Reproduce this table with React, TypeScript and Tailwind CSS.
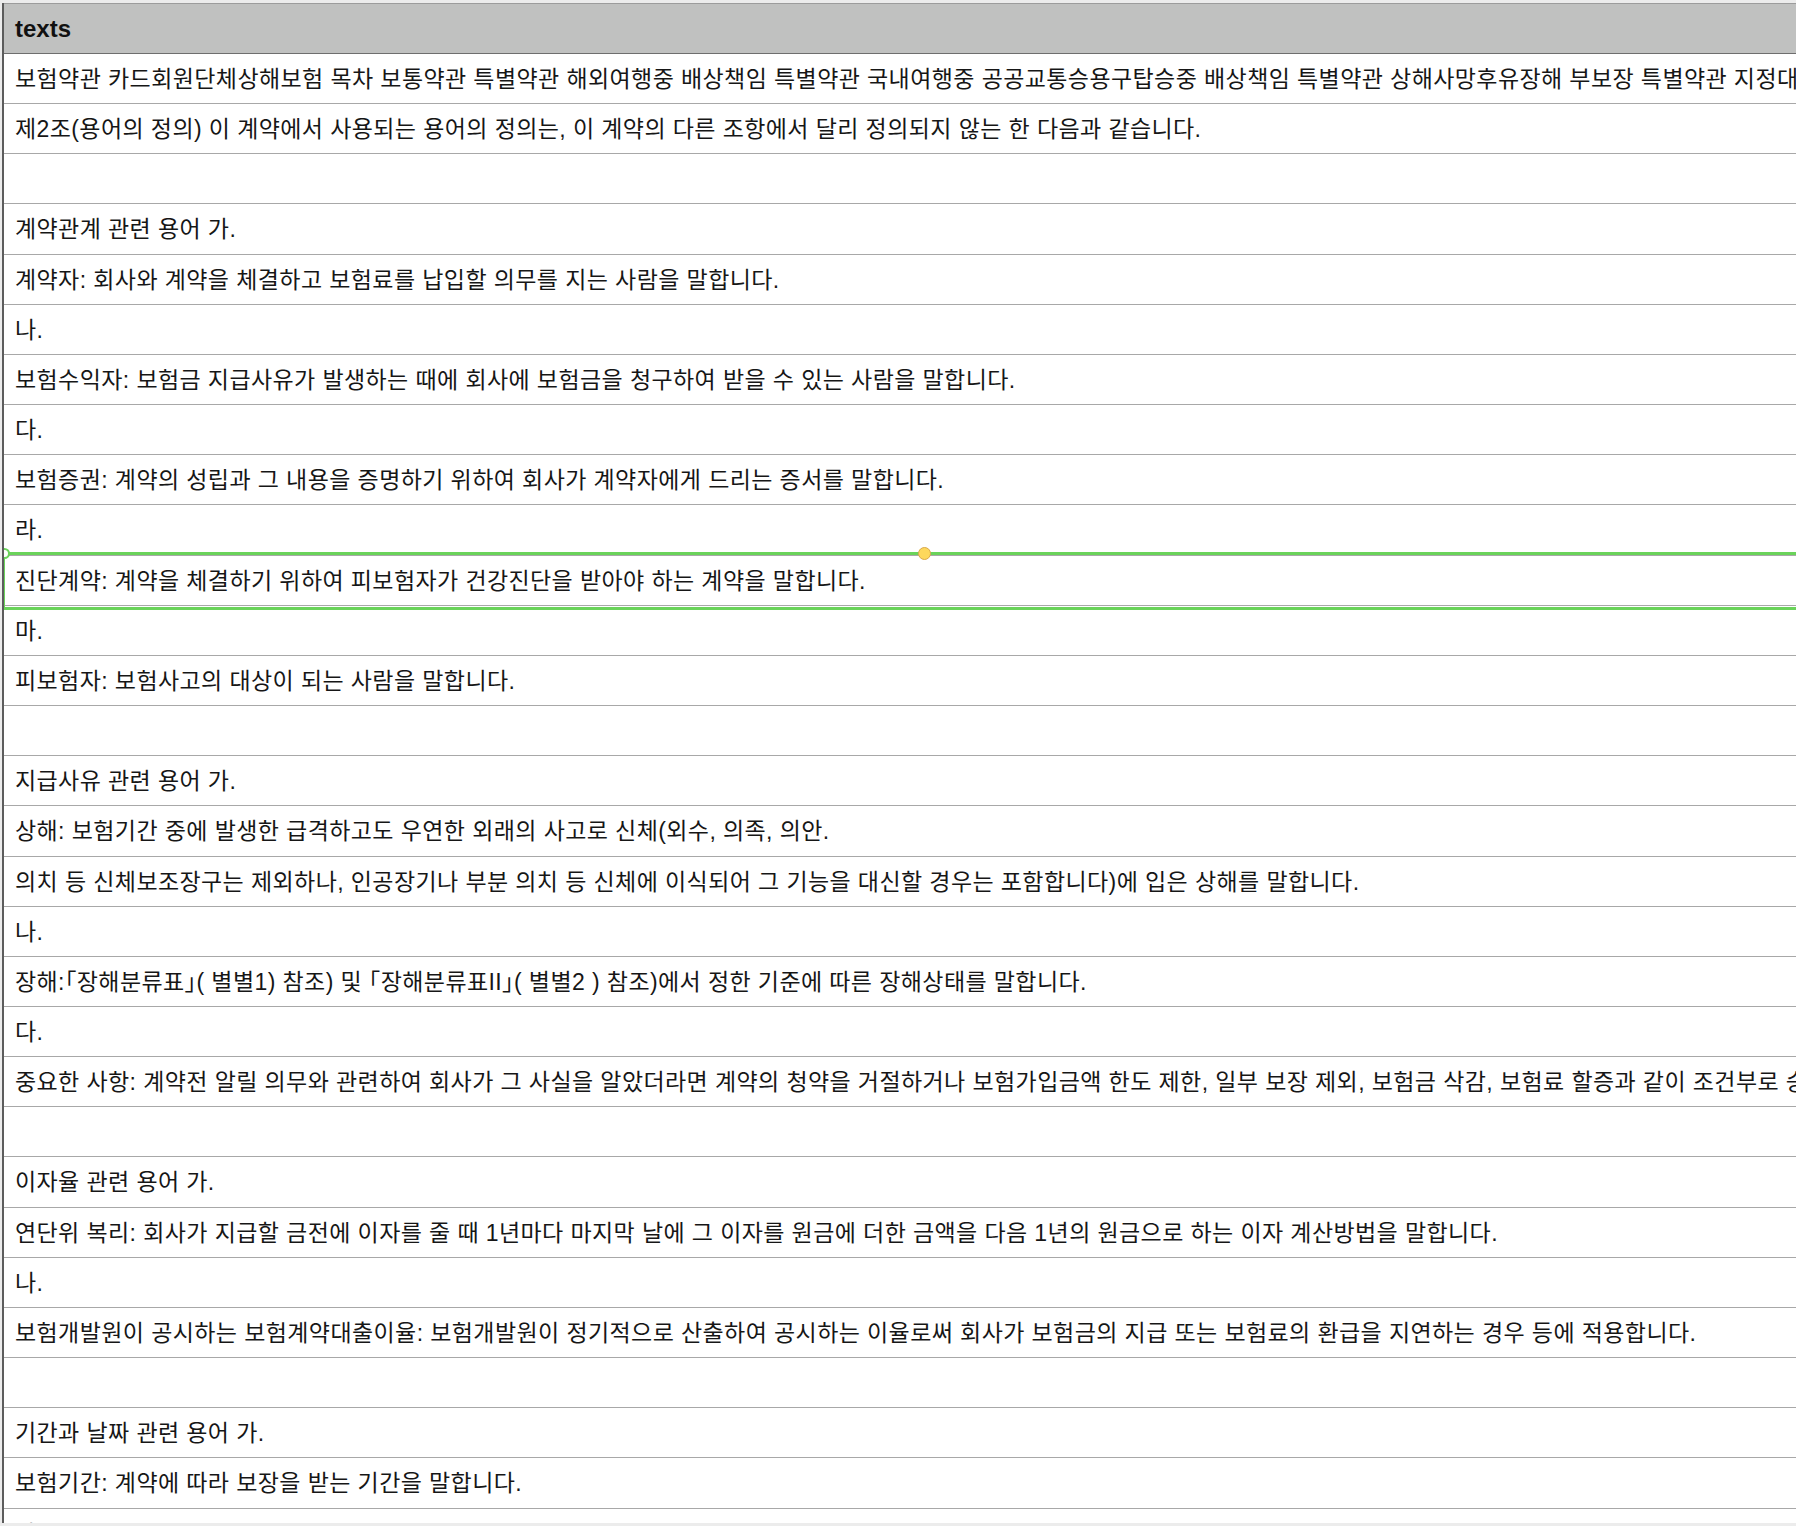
const rows: string[] = [
  '보험약관 카드회원단체상해보험 목차 보통약관 특별약관 해외여행중 배상책임 특별약관 국내여행중 공공교통승용구탑승중 배상책임 특별약관 상해사망후유장해 부보장 특별약관 지정대리청구서비스 특별약관',
  '제2조(용어의 정의) 이 계약에서 사용되는 용어의 정의는, 이 계약의 다른 조항에서 달리 정의되지 않는 한 다음과 같습니다.',
  '',
  '계약관계 관련 용어 가.',
  '계약자: 회사와 계약을 체결하고 보험료를 납입할 의무를 지는 사람을 말합니다.',
  '나.',
  '보험수익자: 보험금 지급사유가 발생하는 때에 회사에 보험금을 청구하여 받을 수 있는 사람을 말합니다.',
  '다.',
  '보험증권: 계약의 성립과 그 내용을 증명하기 위하여 회사가 계약자에게 드리는 증서를 말합니다.',
  '라.',
  '진단계약: 계약을 체결하기 위하여 피보험자가 건강진단을 받아야 하는 계약을 말합니다.',
  '마.',
  '피보험자: 보험사고의 대상이 되는 사람을 말합니다.',
  '',
  '지급사유 관련 용어 가.',
  '상해: 보험기간 중에 발생한 급격하고도 우연한 외래의 사고로 신체(외수, 의족, 의안.',
  '의치 등 신체보조장구는 제외하나, 인공장기나 부분 의치 등 신체에 이식되어 그 기능을 대신할 경우는 포함합니다)에 입은 상해를 말합니다.',
  '나.',
  '장해:｢장해분류표｣( 별별1) 참조) 및 ｢장해분류표II｣( 별별2 ) 참조)에서 정한 기준에 따른 장해상태를 말합니다.',
  '다.',
  '중요한 사항: 계약전 알릴 의무와 관련하여 회사가 그 사실을 알았더라면 계약의 청약을 거절하거나 보험가입금액 한도 제한, 일부 보장 제외, 보험금 삭감, 보험료 할증과 같이 조건부로 승낙하는 등 계약 승낙에 영향을 미칠 수 있는 사항을 말합니다.',
  '',
  '이자율 관련 용어 가.',
  '연단위 복리: 회사가 지급할 금전에 이자를 줄 때 1년마다 마지막 날에 그 이자를 원금에 더한 금액을 다음 1년의 원금으로 하는 이자 계산방법을 말합니다.',
  '나.',
  '보험개발원이 공시하는 보험계약대출이율: 보험개발원이 정기적으로 산출하여 공시하는 이율로써 회사가 보험금의 지급 또는 보험료의 환급을 지연하는 경우 등에 적용합니다.',
  '',
  '기간과 날짜 관련 용어 가.',
  '보험기간: 계약에 따라 보장을 받는 기간을 말합니다.',
  '나.'
]

const selectedRow = 10

export default function App() {
  return (
    <div
      className="relative h-[1526px] w-[1796px] overflow-hidden bg-[#ececec]"
      style={{ fontFamily: '"Liberation Sans", "Noto Sans CJK KR", sans-serif' }}
    >
      <div className="ml-[2px] mt-[3px] h-[1520px] overflow-hidden border-l-2 border-[#5c5c5c] bg-white">
        <div className="flex h-[51px] items-center border-y border-b-[#6e6e6e] border-t-[#9c9c9c] bg-[#c0c1c0] pl-[11px] text-[24px] font-bold text-[#111]">
          texts
        </div>

        {rows.map((text, i) => (
          <div
            key={i}
            className="relative h-[50.17px] whitespace-nowrap border-b border-[#a8a8a8] pl-[11px] pt-[13px] text-[23px] leading-[25px] tracking-[0.4px] text-[#161616]"
          >
            {text}
            {i === selectedRow && (
              <div className="pointer-events-none absolute -left-[2px] -top-[4px] right-0 -bottom-[5px] border-y-[3px] border-l-[3px] border-[#6ad35a]">
                <span className="absolute -left-[6px] -top-[7px] h-[11px] w-[11px] rounded-full border-2 border-[#6ad35a] bg-white" />
                <span className="absolute left-[913px] -top-[8px] h-[13px] w-[13px] rounded-full border border-[#d9a84a] bg-[#fdd85c]" />
              </div>
            )}
          </div>
        ))}
      </div>
    </div>
  )
}
